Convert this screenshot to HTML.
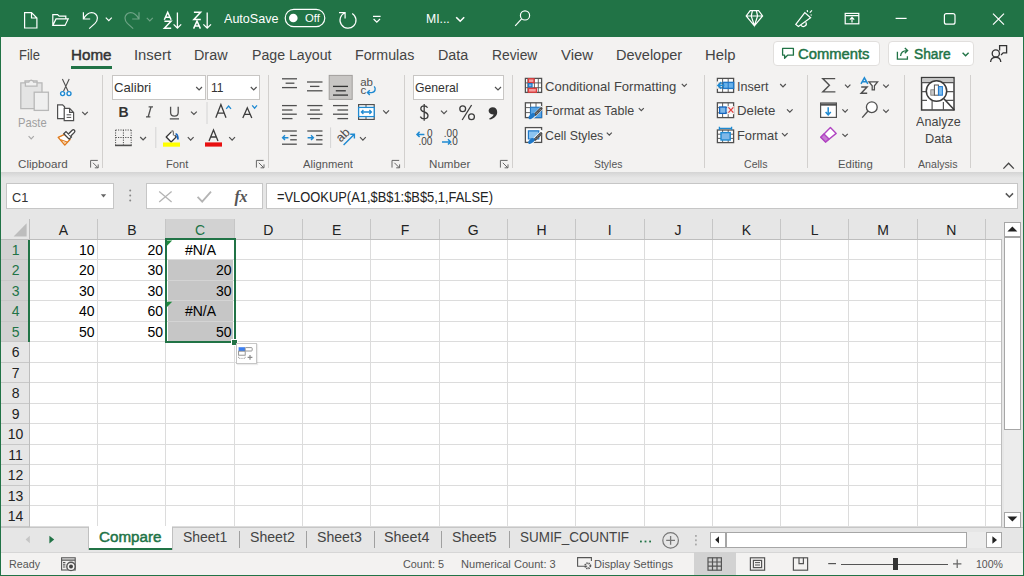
<!DOCTYPE html>
<html><head><meta charset="utf-8">
<style>
*{margin:0;padding:0;box-sizing:border-box}
html,body{width:1024px;height:576px;overflow:hidden;background:#f3f2f1;font-family:"Liberation Sans",sans-serif;position:relative}
.a{position:absolute}
.t{position:absolute;white-space:nowrap;line-height:1}
svg.a{overflow:visible}
</style></head><body>
<div class="a" style="left:0px;top:0px;width:1024px;height:37px;background:#217346;"></div>
<div class="a" style="left:0px;top:37px;width:1024px;height:135px;background:#f3f2f1;"></div>
<div class="a" style="left:1px;top:172px;width:1022px;height:10px;background:linear-gradient(#d4d4d4,#e6e6e6 6px,#e6e6e6);"></div>
<div class="a" style="left:1px;top:182px;width:1022px;height:345px;background:#e6e6e6;"></div>
<div class="a" style="left:6px;top:183px;width:108px;height:26px;background:#fff;border:1px solid #c6c6c6;"></div>
<div class="a" style="left:146px;top:183px;width:117px;height:26px;background:#fff;border:1px solid #c6c6c6;"></div>
<div class="a" style="left:266px;top:183px;width:752px;height:26px;background:#fff;border:1px solid #c6c6c6;"></div>
<div class="a" style="left:30px;top:239px;width:972px;height:288px;background:#fff;"></div>
<div class="a" style="left:1px;top:527px;width:1022px;height:25px;background:#e6e6e6;border-top:1px solid #c6c6c6;"></div>
<div class="a" style="left:1px;top:552px;width:1022px;height:23px;background:#f3f2f1;border-top:1px solid #d6d6d6;"></div>
<div class="a" style="left:0px;top:37px;width:1px;height:539px;background:#217346;"></div>
<div class="a" style="left:1023px;top:37px;width:1px;height:539px;background:#217346;"></div>
<div class="a" style="left:0px;top:575px;width:1024px;height:1px;background:#217346;"></div>
<div class="t" style="left:224.00px;top:11.99px;font-size:13px;color:#fff;transform:scaleX(0.9667);transform-origin:0 0;">AutoSave</div>
<div class="t" style="left:425.50px;top:11.99px;font-size:13px;color:#fff;transform:scaleX(0.9394);transform-origin:0 0;">MI...</div>
<div class="t" style="left:19.00px;top:47.65px;font-size:14px;color:#444;transform:scaleX(0.9307);transform-origin:0 0;">File</div>
<div class="t" style="left:134.00px;top:47.65px;font-size:14px;color:#444;transform:scaleX(1.0567);transform-origin:0 0;">Insert</div>
<div class="t" style="left:194.00px;top:47.65px;font-size:14px;color:#444;transform:scaleX(1.0253);transform-origin:0 0;">Draw</div>
<div class="t" style="left:251.50px;top:47.65px;font-size:14px;color:#444;transform:scaleX(1.0111);transform-origin:0 0;">Page Layout</div>
<div class="t" style="left:355.00px;top:47.65px;font-size:14px;color:#444;transform:scaleX(1.0153);transform-origin:0 0;">Formulas</div>
<div class="t" style="left:437.75px;top:47.65px;font-size:14px;color:#444;transform:scaleX(1.0227);transform-origin:0 0;">Data</div>
<div class="t" style="left:492.20px;top:47.65px;font-size:14px;color:#444;transform:scaleX(0.9868);transform-origin:0 0;">Review</div>
<div class="t" style="left:561.00px;top:47.65px;font-size:14px;color:#444;transform:scaleX(1.0633);transform-origin:0 0;">View</div>
<div class="t" style="left:615.90px;top:47.65px;font-size:14px;color:#444;transform:scaleX(1.0372);transform-origin:0 0;">Developer</div>
<div class="t" style="left:705.30px;top:47.65px;font-size:14px;color:#444;transform:scaleX(1.0591);transform-origin:0 0;">Help</div>
<div class="t" style="left:70.75px;top:47.65px;font-size:14px;color:#333;transform:scaleX(1.0841);transform-origin:0 0;-webkit-text-stroke:0.45px #333;">Home</div>
<div class="a" style="left:71px;top:66px;width:41px;height:3px;background:#217346;"></div>
<div class="a" style="left:773px;top:41px;width:107px;height:25px;background:#fff;border:1px solid #e1dfdd;border-radius:4px;"></div>
<div class="a" style="left:888px;top:41px;width:86px;height:25px;background:#fff;border:1px solid #e1dfdd;border-radius:4px;"></div>
<div class="t" style="left:798.25px;top:47.15px;font-size:14px;color:#217346;transform:scaleX(1.0563);transform-origin:0 0;-webkit-text-stroke:0.45px #217346;">Comments</div>
<div class="t" style="left:913.75px;top:47.15px;font-size:14px;color:#217346;transform:scaleX(0.9837);transform-origin:0 0;-webkit-text-stroke:0.45px #217346;">Share</div>
<div class="t" style="left:17.50px;top:115.99px;font-size:13px;color:#a0a0a0;transform:scaleX(0.8602);transform-origin:0 0;">Paste</div>
<div class="a" style="left:112px;top:75px;width:94px;height:25px;background:#fff;border:1px solid #c8c6c4;"></div>
<div class="a" style="left:207px;top:75px;width:53px;height:25px;background:#fff;border:1px solid #c8c6c4;"></div>
<div class="t" style="left:114.00px;top:80.99px;font-size:13px;color:#333;transform:scaleX(1.0110);transform-origin:0 0;">Calibri</div>
<div class="t" style="left:210.50px;top:80.99px;font-size:13px;color:#333;transform:scaleX(0.9259);transform-origin:0 0;">11</div>
<div class="a" style="left:413px;top:75px;width:91px;height:25px;background:#fff;border:1px solid #c8c6c4;"></div>
<div class="t" style="left:415.10px;top:80.99px;font-size:13px;color:#333;transform:scaleX(0.9405);transform-origin:0 0;">General</div>
<div class="t" style="left:545.25px;top:79.74px;font-size:13px;color:#444;transform:scaleX(1.0035);transform-origin:0 0;">Conditional Formatting</div>
<div class="t" style="left:545.25px;top:104.49px;font-size:13px;color:#444;transform:scaleX(0.9589);transform-origin:0 0;">Format as Table</div>
<div class="t" style="left:545.25px;top:129.24px;font-size:13px;color:#444;transform:scaleX(0.9484);transform-origin:0 0;">Cell Styles</div>
<div class="t" style="left:737.00px;top:79.74px;font-size:13px;color:#444;transform:scaleX(0.9688);transform-origin:0 0;">Insert</div>
<div class="t" style="left:737.00px;top:104.49px;font-size:13px;color:#444;transform:scaleX(1.0179);transform-origin:0 0;">Delete</div>
<div class="t" style="left:737.00px;top:129.24px;font-size:13px;color:#444;transform:scaleX(0.9898);transform-origin:0 0;">Format</div>
<div class="t" style="left:915.50px;top:114.99px;font-size:13px;color:#444;transform:scaleX(0.9676);transform-origin:0 0;">Analyze</div>
<div class="t" style="left:924.50px;top:132.49px;font-size:13px;color:#444;transform:scaleX(0.9829);transform-origin:0 0;">Data</div>
<div class="t" style="left:18.00px;top:158.69px;font-size:11px;color:#555;transform:scaleX(1.0575);transform-origin:0 0;">Clipboard</div>
<div class="t" style="left:166.10px;top:158.69px;font-size:11px;color:#555;transform:scaleX(1.0129);transform-origin:0 0;">Font</div>
<div class="t" style="left:302.60px;top:158.69px;font-size:11px;color:#555;transform:scaleX(1.0179);transform-origin:0 0;">Alignment</div>
<div class="t" style="left:429.25px;top:158.69px;font-size:11px;color:#555;transform:scaleX(1.0543);transform-origin:0 0;">Number</div>
<div class="t" style="left:593.80px;top:158.69px;font-size:11px;color:#555;transform:scaleX(0.9477);transform-origin:0 0;">Styles</div>
<div class="t" style="left:743.75px;top:158.69px;font-size:11px;color:#555;transform:scaleX(0.9610);transform-origin:0 0;">Cells</div>
<div class="t" style="left:838.25px;top:158.69px;font-size:11px;color:#555;transform:scaleX(1.0330);transform-origin:0 0;">Editing</div>
<div class="t" style="left:917.75px;top:158.69px;font-size:11px;color:#555;transform:scaleX(0.9654);transform-origin:0 0;">Analysis</div>
<div class="a" style="left:102px;top:75px;width:1px;height:93px;background:#d2d0ce;"></div>
<div class="a" style="left:268px;top:75px;width:1px;height:93px;background:#d2d0ce;"></div>
<div class="a" style="left:404px;top:75px;width:1px;height:93px;background:#d2d0ce;"></div>
<div class="a" style="left:512px;top:75px;width:1px;height:93px;background:#d2d0ce;"></div>
<div class="a" style="left:704px;top:75px;width:1px;height:93px;background:#d2d0ce;"></div>
<div class="a" style="left:807px;top:75px;width:1px;height:93px;background:#d2d0ce;"></div>
<div class="a" style="left:904px;top:75px;width:1px;height:93px;background:#d2d0ce;"></div>
<div class="a" style="left:970px;top:75px;width:1px;height:93px;background:#d2d0ce;"></div>
<div class="t" style="left:11.65px;top:190.59px;font-size:13px;color:#333;transform:scaleX(0.9774);transform-origin:0 0;">C1</div>
<div class="t" style="left:277.25px;top:190.40px;font-size:14px;color:#222;transform:scaleX(0.9206);transform-origin:0 0;">=VLOOKUP(A1,$B$1:$B$5,1,FALSE)</div>
<div class="a" style="left:1px;top:219px;width:1001px;height:20px;background:#e6e6e6;"></div>
<div class="a" style="left:166px;top:219px;width:69px;height:20px;background:#d2d2d2;"></div>
<div class="a" style="left:1px;top:239px;width:29px;height:288px;background:#e6e6e6;"></div>
<div class="a" style="left:1px;top:239px;width:29px;height:103px;background:#d2d2d2;"></div>
<div class="a" style="left:97px;top:240px;width:1px;height:287px;background:#dcdcdc;"></div>
<div class="a" style="left:97px;top:219px;width:1px;height:20px;background:#c6c6c6;"></div>
<div class="a" style="left:165px;top:240px;width:1px;height:287px;background:#dcdcdc;"></div>
<div class="a" style="left:165px;top:219px;width:1px;height:20px;background:#c6c6c6;"></div>
<div class="a" style="left:234px;top:240px;width:1px;height:287px;background:#dcdcdc;"></div>
<div class="a" style="left:234px;top:219px;width:1px;height:20px;background:#c6c6c6;"></div>
<div class="a" style="left:302px;top:240px;width:1px;height:287px;background:#dcdcdc;"></div>
<div class="a" style="left:302px;top:219px;width:1px;height:20px;background:#c6c6c6;"></div>
<div class="a" style="left:370px;top:240px;width:1px;height:287px;background:#dcdcdc;"></div>
<div class="a" style="left:370px;top:219px;width:1px;height:20px;background:#c6c6c6;"></div>
<div class="a" style="left:439px;top:240px;width:1px;height:287px;background:#dcdcdc;"></div>
<div class="a" style="left:439px;top:219px;width:1px;height:20px;background:#c6c6c6;"></div>
<div class="a" style="left:507px;top:240px;width:1px;height:287px;background:#dcdcdc;"></div>
<div class="a" style="left:507px;top:219px;width:1px;height:20px;background:#c6c6c6;"></div>
<div class="a" style="left:575px;top:240px;width:1px;height:287px;background:#dcdcdc;"></div>
<div class="a" style="left:575px;top:219px;width:1px;height:20px;background:#c6c6c6;"></div>
<div class="a" style="left:644px;top:240px;width:1px;height:287px;background:#dcdcdc;"></div>
<div class="a" style="left:644px;top:219px;width:1px;height:20px;background:#c6c6c6;"></div>
<div class="a" style="left:712px;top:240px;width:1px;height:287px;background:#dcdcdc;"></div>
<div class="a" style="left:712px;top:219px;width:1px;height:20px;background:#c6c6c6;"></div>
<div class="a" style="left:780px;top:240px;width:1px;height:287px;background:#dcdcdc;"></div>
<div class="a" style="left:780px;top:219px;width:1px;height:20px;background:#c6c6c6;"></div>
<div class="a" style="left:848px;top:240px;width:1px;height:287px;background:#dcdcdc;"></div>
<div class="a" style="left:848px;top:219px;width:1px;height:20px;background:#c6c6c6;"></div>
<div class="a" style="left:917px;top:240px;width:1px;height:287px;background:#dcdcdc;"></div>
<div class="a" style="left:917px;top:219px;width:1px;height:20px;background:#c6c6c6;"></div>
<div class="a" style="left:985px;top:240px;width:1px;height:287px;background:#dcdcdc;"></div>
<div class="a" style="left:985px;top:219px;width:1px;height:20px;background:#c6c6c6;"></div>
<div class="a" style="left:30px;top:259px;width:971px;height:1px;background:#dcdcdc;"></div>
<div class="a" style="left:1px;top:259px;width:28px;height:1px;background:#c8c8c8;"></div>
<div class="a" style="left:30px;top:280px;width:971px;height:1px;background:#dcdcdc;"></div>
<div class="a" style="left:1px;top:280px;width:28px;height:1px;background:#c8c8c8;"></div>
<div class="a" style="left:30px;top:300px;width:971px;height:1px;background:#dcdcdc;"></div>
<div class="a" style="left:1px;top:300px;width:28px;height:1px;background:#c8c8c8;"></div>
<div class="a" style="left:30px;top:321px;width:971px;height:1px;background:#dcdcdc;"></div>
<div class="a" style="left:1px;top:321px;width:28px;height:1px;background:#c8c8c8;"></div>
<div class="a" style="left:30px;top:341px;width:971px;height:1px;background:#dcdcdc;"></div>
<div class="a" style="left:1px;top:341px;width:28px;height:1px;background:#c8c8c8;"></div>
<div class="a" style="left:30px;top:362px;width:971px;height:1px;background:#dcdcdc;"></div>
<div class="a" style="left:1px;top:362px;width:28px;height:1px;background:#c8c8c8;"></div>
<div class="a" style="left:30px;top:382px;width:971px;height:1px;background:#dcdcdc;"></div>
<div class="a" style="left:1px;top:382px;width:28px;height:1px;background:#c8c8c8;"></div>
<div class="a" style="left:30px;top:403px;width:971px;height:1px;background:#dcdcdc;"></div>
<div class="a" style="left:1px;top:403px;width:28px;height:1px;background:#c8c8c8;"></div>
<div class="a" style="left:30px;top:423px;width:971px;height:1px;background:#dcdcdc;"></div>
<div class="a" style="left:1px;top:423px;width:28px;height:1px;background:#c8c8c8;"></div>
<div class="a" style="left:30px;top:444px;width:971px;height:1px;background:#dcdcdc;"></div>
<div class="a" style="left:1px;top:444px;width:28px;height:1px;background:#c8c8c8;"></div>
<div class="a" style="left:30px;top:464px;width:971px;height:1px;background:#dcdcdc;"></div>
<div class="a" style="left:1px;top:464px;width:28px;height:1px;background:#c8c8c8;"></div>
<div class="a" style="left:30px;top:485px;width:971px;height:1px;background:#dcdcdc;"></div>
<div class="a" style="left:1px;top:485px;width:28px;height:1px;background:#c8c8c8;"></div>
<div class="a" style="left:30px;top:505px;width:971px;height:1px;background:#dcdcdc;"></div>
<div class="a" style="left:1px;top:505px;width:28px;height:1px;background:#c8c8c8;"></div>
<div class="a" style="left:30px;top:526px;width:971px;height:1px;background:#dcdcdc;"></div>
<div class="a" style="left:1px;top:526px;width:28px;height:1px;background:#c8c8c8;"></div>
<div class="a" style="left:1px;top:239px;width:1001px;height:1px;background:#bdbdbd;"></div>
<div class="a" style="left:29px;top:219px;width:1px;height:308px;background:#bdbdbd;"></div>
<div class="a" style="left:1001px;top:239px;width:1px;height:288px;background:#bdbdbd;"></div>
<div class="t" style="left:29.5px;width:68px;text-align:center;top:222.75px;font-size:14px;color:#222">A</div>
<div class="t" style="left:97.8px;width:68px;text-align:center;top:222.75px;font-size:14px;color:#222">B</div>
<div class="t" style="left:166.1px;width:68px;text-align:center;top:222.75px;font-size:14px;color:#217346">C</div>
<div class="t" style="left:234.4px;width:68px;text-align:center;top:222.75px;font-size:14px;color:#222">D</div>
<div class="t" style="left:302.7px;width:68px;text-align:center;top:222.75px;font-size:14px;color:#222">E</div>
<div class="t" style="left:371.0px;width:68px;text-align:center;top:222.75px;font-size:14px;color:#222">F</div>
<div class="t" style="left:439.2px;width:68px;text-align:center;top:222.75px;font-size:14px;color:#222">G</div>
<div class="t" style="left:507.5px;width:68px;text-align:center;top:222.75px;font-size:14px;color:#222">H</div>
<div class="t" style="left:575.8px;width:68px;text-align:center;top:222.75px;font-size:14px;color:#222">I</div>
<div class="t" style="left:644.1px;width:68px;text-align:center;top:222.75px;font-size:14px;color:#222">J</div>
<div class="t" style="left:712.4px;width:68px;text-align:center;top:222.75px;font-size:14px;color:#222">K</div>
<div class="t" style="left:780.7px;width:68px;text-align:center;top:222.75px;font-size:14px;color:#222">L</div>
<div class="t" style="left:849.0px;width:68px;text-align:center;top:222.75px;font-size:14px;color:#222">M</div>
<div class="t" style="left:917.3px;width:68px;text-align:center;top:222.75px;font-size:14px;color:#222">N</div>
<div class="t" style="left:1.6px;width:28px;text-align:center;top:243.35px;font-size:14px;color:#217346">1</div>
<div class="t" style="left:1.6px;width:28px;text-align:center;top:263.35px;font-size:14px;color:#217346">2</div>
<div class="t" style="left:1.6px;width:28px;text-align:center;top:284.35px;font-size:14px;color:#217346">3</div>
<div class="t" style="left:1.6px;width:28px;text-align:center;top:304.35px;font-size:14px;color:#217346">4</div>
<div class="t" style="left:1.6px;width:28px;text-align:center;top:325.35px;font-size:14px;color:#217346">5</div>
<div class="t" style="left:1.6px;width:28px;text-align:center;top:345.35px;font-size:14px;color:#222">6</div>
<div class="t" style="left:1.6px;width:28px;text-align:center;top:366.35px;font-size:14px;color:#222">7</div>
<div class="t" style="left:1.6px;width:28px;text-align:center;top:386.35px;font-size:14px;color:#222">8</div>
<div class="t" style="left:1.6px;width:28px;text-align:center;top:407.35px;font-size:14px;color:#222">9</div>
<div class="t" style="left:1.6px;width:28px;text-align:center;top:427.35px;font-size:14px;color:#222">10</div>
<div class="t" style="left:1.6px;width:28px;text-align:center;top:448.35px;font-size:14px;color:#222">11</div>
<div class="t" style="left:1.6px;width:28px;text-align:center;top:468.35px;font-size:14px;color:#222">12</div>
<div class="t" style="left:1.6px;width:28px;text-align:center;top:489.35px;font-size:14px;color:#222">13</div>
<div class="t" style="left:1.6px;width:28px;text-align:center;top:509.35px;font-size:14px;color:#222">14</div>
<div class="a" style="left:168px;top:260px;width:65px;height:81px;background:#c6c6c6;"></div>
<div class="a" style="left:168px;top:280px;width:65px;height:1px;background:#d4d4d4;"></div>
<div class="a" style="left:168px;top:300px;width:65px;height:1px;background:#d4d4d4;"></div>
<div class="a" style="left:168px;top:321px;width:65px;height:1px;background:#d4d4d4;"></div>
<div class="t" style="left:30px;width:64.5px;text-align:right;top:243.35px;font-size:14px;color:#000">10</div>
<div class="t" style="left:98px;width:65px;text-align:right;top:243.35px;font-size:14px;color:#000">20</div>
<div class="t" style="left:166px;width:69px;text-align:center;top:243.35px;font-size:14px;color:#000">#N/A</div>
<div class="t" style="left:30px;width:64.5px;text-align:right;top:263.35px;font-size:14px;color:#000">20</div>
<div class="t" style="left:98px;width:65px;text-align:right;top:263.35px;font-size:14px;color:#000">30</div>
<div class="t" style="left:166px;width:65.5px;text-align:right;top:263.35px;font-size:14px;color:#000">20</div>
<div class="t" style="left:30px;width:64.5px;text-align:right;top:284.35px;font-size:14px;color:#000">30</div>
<div class="t" style="left:98px;width:65px;text-align:right;top:284.35px;font-size:14px;color:#000">30</div>
<div class="t" style="left:166px;width:65.5px;text-align:right;top:284.35px;font-size:14px;color:#000">30</div>
<div class="t" style="left:30px;width:64.5px;text-align:right;top:304.35px;font-size:14px;color:#000">40</div>
<div class="t" style="left:98px;width:65px;text-align:right;top:304.35px;font-size:14px;color:#000">60</div>
<div class="t" style="left:166px;width:69px;text-align:center;top:304.35px;font-size:14px;color:#000">#N/A</div>
<div class="t" style="left:30px;width:64.5px;text-align:right;top:325.35px;font-size:14px;color:#000">50</div>
<div class="t" style="left:98px;width:65px;text-align:right;top:325.35px;font-size:14px;color:#000">50</div>
<div class="t" style="left:166px;width:65.5px;text-align:right;top:325.35px;font-size:14px;color:#000">50</div>
<div class="a" style="left:165px;top:238px;width:71px;height:105px;background:transparent;border:2px solid #217346;"></div>
<div class="a" style="left:231px;top:339px;width:7px;height:7px;background:#fff;"></div>
<div class="a" style="left:232px;top:340px;width:5px;height:5px;background:#217346;"></div>
<div class="a" style="left:28px;top:240px;width:2px;height:102px;background:#217346;"></div>
<div class="a" style="left:88px;top:527px;width:1px;height:23px;background:#c0c0c0;"></div>
<div class="a" style="left:172px;top:527px;width:1px;height:23px;background:#c0c0c0;"></div>
<div class="a" style="left:89px;top:526px;width:83px;height:24px;background:#fff;"></div>
<div class="a" style="left:89px;top:548px;width:83px;height:2px;background:#217346;"></div>
<div class="t" style="left:98.90px;top:529.75px;font-size:14px;color:#217346;transform:scaleX(1.0852);transform-origin:0 0;-webkit-text-stroke:0.45px #217346;">Compare</div>
<div class="t" style="left:182.50px;top:530.15px;font-size:14px;color:#444;transform:scaleX(0.9972);transform-origin:0 0;">Sheet1</div>
<div class="t" style="left:250.00px;top:530.15px;font-size:14px;color:#444;transform:scaleX(1.0085);transform-origin:0 0;">Sheet2</div>
<div class="t" style="left:317.00px;top:530.15px;font-size:14px;color:#444;transform:scaleX(1.0085);transform-origin:0 0;">Sheet3</div>
<div class="t" style="left:384.25px;top:530.15px;font-size:14px;color:#444;transform:scaleX(1.0220);transform-origin:0 0;">Sheet4</div>
<div class="t" style="left:452.10px;top:530.15px;font-size:14px;color:#444;transform:scaleX(1.0073);transform-origin:0 0;">Sheet5</div>
<div class="t" style="left:519.90px;top:530.15px;font-size:14px;color:#444;transform:scaleX(0.9607);transform-origin:0 0;">SUMIF_COUNTIF</div>
<div class="a" style="left:239px;top:531px;width:1px;height:17px;background:#a0a0a0;"></div>
<div class="a" style="left:306px;top:531px;width:1px;height:17px;background:#a0a0a0;"></div>
<div class="a" style="left:374px;top:531px;width:1px;height:17px;background:#a0a0a0;"></div>
<div class="a" style="left:441px;top:531px;width:1px;height:17px;background:#a0a0a0;"></div>
<div class="a" style="left:509px;top:531px;width:1px;height:17px;background:#a0a0a0;"></div>
<div class="a" style="left:710px;top:532px;width:16px;height:16px;background:#fff;border:1px solid #a6a6a6;"></div>
<div class="a" style="left:966px;top:532px;width:20px;height:16px;background:#ececec;"></div>
<div class="a" style="left:726px;top:532px;width:241px;height:16px;background:#fff;border:1px solid #a6a6a6;"></div>
<div class="a" style="left:986px;top:532px;width:16px;height:16px;background:#fff;border:1px solid #a6a6a6;"></div>
<div class="a" style="left:1004px;top:222px;width:17px;height:15px;background:#fff;border:1px solid #a6a6a6;"></div>
<div class="a" style="left:1004px;top:429px;width:17px;height:83px;background:#ececec;"></div>
<div class="a" style="left:1004px;top:237px;width:17px;height:193px;background:#fff;border:1px solid #a6a6a6;"></div>
<div class="a" style="left:1004px;top:512px;width:17px;height:16px;background:#fff;border:1px solid #a6a6a6;"></div>
<div class="t" style="left:9.25px;top:558.94px;font-size:11px;color:#555;transform:scaleX(0.9749);transform-origin:0 0;">Ready</div>
<div class="t" style="left:402.90px;top:558.94px;font-size:11px;color:#555;transform:scaleX(0.9857);transform-origin:0 0;">Count: 5</div>
<div class="t" style="left:461.00px;top:558.94px;font-size:11px;color:#555;transform:scaleX(1.0063);transform-origin:0 0;">Numerical Count: 3</div>
<div class="t" style="left:594.40px;top:558.94px;font-size:11px;color:#555;transform:scaleX(1.0029);transform-origin:0 0;">Display Settings</div>
<div class="t" style="left:975.50px;top:558.94px;font-size:11px;color:#555;transform:scaleX(0.9595);transform-origin:0 0;">100%</div>
<div class="a" style="left:694px;top:552px;width:42px;height:23px;background:#d2d2d2;"></div>
<div class="a" style="left:841px;top:564px;width:107px;height:1px;background:#555;"></div>
<div class="a" style="left:893px;top:558px;width:5px;height:12px;background:#333;"></div>
<svg class="a" style="left:0px;top:0px;" width="1024" height="37" viewBox="0 0 1024 37">
<g stroke="#fff" stroke-width="1.2" fill="none">
<path d="M24.6,12.6 H31.5 L36.9,18 V28 H24.6 Z M31.5,12.6 V18 H36.9"/>
<path d="M52.8,25.4 V14.6 H57.6 L59.2,16.2 H65.8 V18.9 M52.8,25.4 L56,18.9 H68.2 L65,25.4 Z"/>
<path d="M83.4,12.2 V19 H90.2 M83.6,18.8 C86,14.5 89,12.6 91.6,12.6 C95,12.6 97.4,15.2 97.4,18 C97.4,20.5 96.4,22 95,23.4 L89.2,28.6"/>
<path d="M105.8,17.6 L108.8,20.6 L111.8,17.6"/>
<path d="M373,16.4 H380.6 M373.6,19 L376.8,22.2 L380,19"/>
<path d="M456.2,17.2 L460.2,21.2 L464.2,17.2" stroke-width="1.6"/>
<rect x="285.2" y="9.4" width="39.6" height="17.2" rx="8.6"/>
<path d="M339,12.6 H345.1 V18.6 M345,12.8 A8,8 0 1 0 352.2,13.4"/>
<circle cx="525" cy="15.4" r="4.6"/><path d="M521.6,18.9 L515.2,25.8"/>
<path d="M750.2,10.6 H758.6 L762.6,16 L754.4,25.8 L746.2,16 Z M746.2,16 H762.6 M752.4,10.8 L751.2,16 L754.4,25.6 L757.6,16 L756.4,10.8"/>
<path d="M795.8,24.4 L804.8,12.6 L810.6,17.8 L798.4,26.4 Z M801,25.2 A2.6,2.6 0 0 0 805.8,22.2 M807.2,10.2 L807.6,12 M809.8,12.6 L812,10.4 M810.6,14.8 L811.8,15.2"/>
<rect x="845.2" y="13.4" width="13.6" height="10.4"/><path d="M845.2,15.6 H858.8 M852,22.6 V17.6 M849.8,19.6 L852,17.4 L854.2,19.6"/>
<path d="M895.6,18.4 H906.6"/>
<rect x="944.4" y="13.6" width="10.6" height="10.6" rx="2"/>
<path d="M993,13.6 L1004,24.6 M1004,13.6 L993,24.6"/>
</g>
<g stroke="rgba(255,255,255,0.35)" stroke-width="1.2" fill="none">
<path d="M139,12.2 V19 H132.2 M138.8,18.8 C136.4,14.5 133.4,12.6 130.8,12.6 C127.4,12.6 125,15.2 125,18 C125,20.5 126,22 127.4,23.4 L133.2,28.6"/>
<path d="M146.8,17.8 L149.8,20.8 L152.8,17.8"/>
</g>
<circle cx="293.3" cy="18" r="4.3" fill="#fff"/>
<g stroke="#fff" stroke-width="1.3" fill="none">
<path d="M177.4,12.4 V28.2 M173.6,24.4 L177.4,28.2 L181.2,24.4"/>
<path d="M207.2,12.4 V28.2 M203.4,24.4 L207.2,28.2 L211,24.4"/>
</g>
</svg>
<svg class="a" style="left:0px;top:0px;" width="1024" height="37" viewBox="0 0 1024 37"><g stroke="#fff" stroke-width="1.5" fill="none" stroke-linejoin="miter">
<path d="M164.3,19.8 L167.7,12.3 L171.1,19.8 M165.4,17.3 H170"/><path d="M164.4,21.2 H171 L164.4,28.2 H171.2"/>
<path d="M193.9,12.3 H200.6 L193.9,19.4 H200.8"/><path d="M193.6,28.6 L197,21.1 L200.4,28.6 M194.7,26.1 H199.3"/>
</g></svg>
<div class="t" style="left:304.50px;top:12.89px;font-size:11px;color:#fff;transform:scaleX(1.0218);transform-origin:0 0;">Off</div>
<svg class="a" style="left:0px;top:0px;" width="1024" height="176" viewBox="0 0 1024 176"><g stroke="#b8b8b8" stroke-width="1.3" fill="#e4e4e4">
<path d="M20.8,82.8 H25 V80.8 H37 V82.8 H42 V108.6 H20.8 Z"/>
<path d="M25.4,86.2 V82.2 H28.8 C29.2,79.6 33.2,79.6 33.6,82.2 H37 V86.2 Z" fill="#f0f0f0"/>
<rect x="34.2" y="92.2" width="14.2" height="18.2" fill="#efefef"/>
</g>
<path d="M28.6,136.2 L31.200000000000003,138.79999999999998 L33.800000000000004,136.2" stroke="#a8a8a8" stroke-width="1.2" fill="none"/>
<path d="M62.4,79 L68.2,91.4 M69.2,79 L63.4,91.4" stroke="#505050" stroke-width="1.1" fill="none"/>
<circle cx="62.6" cy="93.6" r="2" stroke="#1f8ad2" stroke-width="1.4" fill="#fff"/><circle cx="69" cy="93.6" r="2" stroke="#1f8ad2" stroke-width="1.4" fill="#fff"/>
<g stroke="#505050" stroke-width="1.2" fill="#fff">
<path d="M57.6,104.8 H62.6 L64.6,106.8 V118.6 H57.6 Z"/>
<path d="M64.2,108.4 H69.6 L73.6,112.4 V120.6 H64.2 Z M69.6,108.4 V112.4 H73.6"/>
<path d="M66.6,114.8 H71.2 M66.6,117.4 H71.2" stroke-width="1"/>
</g>
<path d="M82.2,111.8 L85.0,114.6 L87.8,111.8" stroke="#505050" stroke-width="1.2" fill="none"/>
<path d="M64.6,134.4 L58.2,137.4 L64.8,145 L70,139.6 Z" fill="#fff" stroke="#e07b1d" stroke-width="1.4" stroke-linejoin="round"/>
<path d="M60.8,139.8 L67.2,142" stroke="#e07b1d" stroke-width="1.1"/><path d="M63,142.2 L66,143" stroke="#f7c48e" stroke-width="1.2"/>
<path d="M63.8,133.8 L66,131.6 L71.4,137 L69.2,139.2 Z" fill="#fff" stroke="#444" stroke-width="1.3"/>
<path d="M68.4,134 L72.2,130.2 C72.8,129.6 73.8,129.6 74.4,130.2 C75,130.8 75,131.8 74.4,132.4 L70.6,136.2" fill="#fff" stroke="#444" stroke-width="1.3"/>
<path d="M250.8,87 L253.70000000000002,89.9 L256.6,87" stroke="#505050" stroke-width="1.2" fill="none"/>
<path d="M196.2,87 L199.1,89.9 L202.0,87" stroke="#505050" stroke-width="1.2" fill="none"/>
<path d="M191,111.6 L193.9,114.5 L196.8,111.6" stroke="#505050" stroke-width="1.2" fill="none"/>
<path d="M140.2,137 L143.1,139.9 L146.0,137" stroke="#505050" stroke-width="1.2" fill="none"/>
<path d="M187.8,137.2 L190.70000000000002,140.1 L193.60000000000002,137.2" stroke="#505050" stroke-width="1.2" fill="none"/>
<path d="M229.2,137.2 L232.1,140.1 L235.0,137.2" stroke="#505050" stroke-width="1.2" fill="none"/>
<path d="M148.6,106.9 H153 M146,116.9 H150.4 M151,107 L148.2,116.8" stroke="#505050" stroke-width="1.3" fill="none"/>
<path d="M170.6,106.8 V112.6 C170.6,117.4 178.2,117.4 178.2,112.6 V106.8 M169.8,118.8 H179" stroke="#505050" stroke-width="1.3" fill="none"/>
<path d="M215.8,117.8 L220.9,104.6 L226,117.8 M217.6,113.2 H224.2" stroke="#3c3c3c" stroke-width="1.3" fill="none"/>
<path d="M226.2,108.8 L228.6,106 L231,108.8" stroke="#1f8ad2" stroke-width="1.3" fill="none"/>
<path d="M242.8,118 L247.3,107.8 L251.8,118 M244.4,114.4 H250.2" stroke="#3c3c3c" stroke-width="1.3" fill="none"/>
<path d="M252.2,105.4 L254.6,108.2 L257,105.4" stroke="#1f8ad2" stroke-width="1.3" fill="none"/>
<path d="M207,102 V124 M155.8,127 V148" stroke="#d4d4d4" stroke-width="1"/>
<g stroke="#505050" stroke-width="1" stroke-dasharray="1.2 1.2" fill="none">
<path d="M115.6,130 H131.2 M115.6,130 V145 M131.2,130 V145 M123.4,130 V145 M115.6,137.5 H131.2"/></g>
<path d="M115,145.4 H131.8" stroke="#505050" stroke-width="1.6"/>
<path d="M171.3,131.9 L166.2,137 L171.1,142 L176.3,136.9 L174.6,135.2" fill="#fff" stroke="#333" stroke-width="1.3" stroke-linejoin="round"/>
<path d="M171.4,131.6 C172.2,130.4 173.4,130.8 173.4,132.2 V135.6" stroke="#777" stroke-width="1.2" fill="none"/>
<path d="M175.6,133.8 C177.4,133.8 177.9,135.8 177.9,139.6" stroke="#1565c0" stroke-width="1.8" fill="none"/>
<rect x="163" y="142.5" width="17" height="4.2" fill="#ffff00"/>
<path d="M209,141 L213.5,130 L218,141 M210.8,137 H216.2" stroke="#3c3c3c" stroke-width="1.3" fill="none"/>
<rect x="205" y="142.4" width="17" height="4.2" fill="#e81010"/>
<path d="M282,78.8 H297" stroke="#505050" stroke-width="1.3"/><path d="M285.6,83.2 H294.4" stroke="#505050" stroke-width="1.3"/><path d="M282,87.6 H297" stroke="#505050" stroke-width="1.3"/>
<path d="M307,82 H322.5" stroke="#505050" stroke-width="1.3"/><path d="M310,86.4 H319.4" stroke="#505050" stroke-width="1.3"/><path d="M307,90.8 H322.5" stroke="#505050" stroke-width="1.3"/>
<rect x="329.2" y="75.4" width="23" height="24" fill="#c8c6c4" stroke="#a19f9d" stroke-width="1"/>
<path d="M333,86.4 H348" stroke="#333" stroke-width="1.3"/><path d="M335.8,90.8 H345.8" stroke="#333" stroke-width="1.3"/><path d="M333,95.1 H348" stroke="#333" stroke-width="1.3"/>
<path d="M282,105.6 H296.8" stroke="#505050" stroke-width="1.3"/><path d="M282,110 H292.5" stroke="#505050" stroke-width="1.3"/><path d="M282,114.2 H296.8" stroke="#505050" stroke-width="1.3"/><path d="M282,118.6 H292.5" stroke="#505050" stroke-width="1.3"/>
<path d="M307.3,105.6 H322.5" stroke="#505050" stroke-width="1.3"/><path d="M310,110 H319.9" stroke="#505050" stroke-width="1.3"/><path d="M307.3,114.2 H322.5" stroke="#505050" stroke-width="1.3"/><path d="M310,118.6 H319.9" stroke="#505050" stroke-width="1.3"/>
<path d="M333,105.6 H348.1" stroke="#505050" stroke-width="1.3"/><path d="M337.4,110 H348.1" stroke="#505050" stroke-width="1.3"/><path d="M333,114.2 H348.1" stroke="#505050" stroke-width="1.3"/><path d="M337.4,118.6 H348.1" stroke="#505050" stroke-width="1.3"/>
<path d="M374.2,86.4 C376.2,88.6 375.2,92.6 371.6,92.6 H367.6 M369.8,90.2 L367.4,92.6 L369.8,95" stroke="#1f8ad2" stroke-width="1.4" fill="none"/>
<rect x="358.6" y="104.6" width="15.6" height="14.8" fill="#fff" stroke="#505050" stroke-width="1.2"/>
<path d="M366,104.6 V119.4" stroke="#505050" stroke-width="1"/>
<rect x="358.6" y="107.4" width="15.6" height="9.2" fill="#fff" stroke="#1f8ad2" stroke-width="1.3"/>
<path d="M361.4,112 H371.4 M363.4,110 L361.4,112 L363.4,114 M369.4,110 L371.4,112 L369.4,114" stroke="#1f8ad2" stroke-width="1.3" fill="none"/>
<path d="M383.2,110.4 L386.09999999999997,113.30000000000001 L389.0,110.4" stroke="#505050" stroke-width="1.2" fill="none"/>
<path d="M282,131 H296.8" stroke="#505050" stroke-width="1.3"/><path d="M290.2,135.5 H296.8" stroke="#505050" stroke-width="1.3"/><path d="M290.2,139.8 H296.8" stroke="#505050" stroke-width="1.3"/><path d="M282,144.2 H296.8" stroke="#505050" stroke-width="1.3"/>
<path d="M288.4,137.7 H282.6 M285,135.3 L282.6,137.7 L285,140.1" stroke="#1f8ad2" stroke-width="1.4" fill="none"/>
<path d="M307.3,131 H322.5" stroke="#505050" stroke-width="1.3"/><path d="M316.1,135.5 H322.5" stroke="#505050" stroke-width="1.3"/><path d="M316.1,139.8 H322.5" stroke="#505050" stroke-width="1.3"/><path d="M307.3,144.2 H322.5" stroke="#505050" stroke-width="1.3"/>
<path d="M307.6,137.7 H313.4 M311,135.3 L313.4,137.7 L311,140.1" stroke="#1f8ad2" stroke-width="1.4" fill="none"/>
<path d="M330.6,127.4 V148" stroke="#d4d4d4" stroke-width="1"/>
<path d="M343.6,145 L354.4,134.2 M350.2,134.2 H354.4 V138.4" stroke="#1f8ad2" stroke-width="1.4" fill="none"/>
<path d="M360,137.2 L362.9,140.1 L365.8,137.2" stroke="#505050" stroke-width="1.2" fill="none"/>
<path d="M441,110.6 L444.0,113.6 L447,110.6" stroke="#505050" stroke-width="1.2" fill="none"/>
<path d="M495,87 L498.0,90.0 L501,87" stroke="#505050" stroke-width="1.2" fill="none"/>
<path d="M424.4,134.4 H417 M419.6,131.8 L417,134.4 L419.6,137" stroke="#1f8ad2" stroke-width="1.5" fill="none"/>
<path d="M442,141.9 H450.6 M448,139.3 L450.6,141.9 L448,144.5" stroke="#1f8ad2" stroke-width="1.5" fill="none"/>
<path d="M90.6,167.6 V160.4 H97.8 M93.0,162.8 L98.0,167.8 M98.19999999999999,164.4 V167.8 H94.8" stroke="#666" stroke-width="1" fill="none"/>
<path d="M256.4,167.6 V160.4 H263.59999999999997 M258.79999999999995,162.8 L263.79999999999995,167.8 M264.0,164.4 V167.8 H260.59999999999997" stroke="#666" stroke-width="1" fill="none"/>
<path d="M392,167.6 V160.4 H399.2 M394.4,162.8 L399.4,167.8 M399.6,164.4 V167.8 H396.2" stroke="#666" stroke-width="1" fill="none"/>
<path d="M500.4,167.6 V160.4 H507.59999999999997 M502.79999999999995,162.8 L507.79999999999995,167.8 M508.0,164.4 V167.8 H504.59999999999997" stroke="#666" stroke-width="1" fill="none"/></svg>
<div class="t" style="left:118.6px;top:105.15px;font-size:14px;font-weight:bold;color:#333">B</div>
<div class="t" style="left:360.2px;top:76.86px;font-size:11.5px;color:#505050">ab</div>
<div class="t" style="left:360.4px;top:84.86px;font-size:11.5px;color:#505050">c</div>
<div class="t" style="left:334.2px;top:129.4px;font-size:12.5px;color:#505050;transform:rotate(-45deg);transform-origin:50% 50%;width:18px;height:12.5px;text-align:center">ab</div>
<svg class="a" style="left:0px;top:0px;" width="1024" height="176" viewBox="0 0 1024 176"><g stroke="#3c3c3c" stroke-width="1.3" fill="none"><path d="M427.6,107.8 C426.8,106.4 425.6,105.8 424.2,105.8 C422,105.8 420.8,107.1 420.8,108.9 C420.8,112.6 428,111.3 428,115.6 C428,117.6 426.5,118.8 424.2,118.8 C422.5,118.8 421.1,118.1 420.3,116.6 M424.2,104 V120.8"/><circle cx="462.7" cy="108.7" r="2.9"/><circle cx="471.5" cy="116.7" r="2.9"/><path d="M471.6,105 L462.2,120"/></g></svg>
<svg class="a" style="left:0px;top:0px;" width="1024" height="176" viewBox="0 0 1024 176"><path d="M492.6,107.2 C495.4,107.2 497.2,109.2 497.2,112 C497.2,115.8 494.4,118.6 489.6,119.6 L489.2,118.4 C491.8,117.4 493.4,115.8 493.6,114.6 C490.8,114.6 488.6,113 488.6,110.8 C488.6,108.8 490.4,107.2 492.6,107.2 Z" fill="#333"/></svg>
<div class="t" style="left:427px;top:128.53px;font-size:10px;color:#444">0</div>
<div class="t" style="left:418.4px;top:137.13px;font-size:10px;color:#444">.00</div>
<div class="t" style="left:443.8px;top:128.53px;font-size:10px;color:#444">.00</div>
<div class="t" style="left:449.6px;top:137.13px;font-size:10px;color:#444">.0</div>
<svg class="a" style="left:0px;top:0px;" width="1024" height="176" viewBox="0 0 1024 176"><rect x="525.4" y="78.4" width="16.200000000000045" height="14.0" fill="#fff" stroke="#505050" stroke-width="1.3"/><path d="M527.9,78.4 V92.4" stroke="#505050" stroke-width="0.9"/><path d="M534.4,78.4 V92.4" stroke="#505050" stroke-width="0.9"/><path d="M538.3,78.4 V92.4" stroke="#505050" stroke-width="0.9"/><path d="M525.4,82.9 H541.6" stroke="#505050" stroke-width="0.9"/><path d="M525.4,87.7 H541.6" stroke="#505050" stroke-width="0.9"/>
<rect x="528.4" y="78.8" width="5.6" height="3.8" fill="#f4a0a0" stroke="#e03c3c" stroke-width="1.3"/>
<rect x="528.4" y="83.6" width="3.6" height="3.4" fill="#7fb8e8" stroke="#1f78c8" stroke-width="1.3"/>
<rect x="528.4" y="88.4" width="8" height="3.8" fill="#f4a0a0" stroke="#e03c3c" stroke-width="1.3"/>
<path d="M681.8,83.8 L684.3,86.3 L686.8,83.8" stroke="#505050" stroke-width="1.2" fill="none"/>
<rect x="525.4" y="102.8" width="16.200000000000045" height="14.799999999999997" fill="#fff" stroke="#505050" stroke-width="1.3"/><path d="M530.6,102.8 V117.6" stroke="#505050" stroke-width="0.9"/><path d="M536,102.8 V117.6" stroke="#505050" stroke-width="0.9"/><path d="M525.4,107.6 H541.6" stroke="#505050" stroke-width="0.9"/><path d="M525.4,112.6 H541.6" stroke="#505050" stroke-width="0.9"/>
<path d="M530.4,107.2 H541.6 V117.6 H530.4 Z" fill="#5aa6e6" stroke="#1f78c8" stroke-width="1"/>
<path d="M530.6,119.2 L542.8,107" stroke="#f3f2f1" stroke-width="3.6"/>
<path d="M535.2,114.6 L541.2,108.6" stroke="#4a4a4a" stroke-width="2.8" stroke-linecap="round"/><path d="M535.8,114 L540.8,109" stroke="#bbb" stroke-width="0.9" stroke-dasharray="1 1"/>
<ellipse cx="531.8" cy="116.2" rx="3.8" ry="2.1" transform="rotate(-40 531.8 116.2)" fill="#1f78c8"/>
<path d="M638.8,108.2 L641.3,110.7 L643.8,108.2" stroke="#505050" stroke-width="1.2" fill="none"/>
<rect x="525.4" y="127.6" width="16.2" height="14.8" fill="#fff" stroke="#505050" stroke-width="1.3"/>
<path d="M528.4,130.8 H538.8 V139 H528.4 Z" fill="#8cc4f0" stroke="#1f78c8" stroke-width="1.2"/>
<path d="M529.8,144 L543,131" stroke="#fff" stroke-width="3.6"/>
<path d="M535,139.4 L541,133.4" stroke="#4a4a4a" stroke-width="2.8" stroke-linecap="round"/><path d="M535.6,138.8 L540.6,133.8" stroke="#bbb" stroke-width="0.9" stroke-dasharray="1 1"/>
<ellipse cx="531.4" cy="141" rx="3.8" ry="2.1" transform="rotate(-40 531.4 141)" fill="#1f78c8"/>
<path d="M606.8,132.6 L609.3,135.1 L611.8,132.6" stroke="#505050" stroke-width="1.2" fill="none"/>
<rect x="717.4" y="78.4" width="16.200000000000045" height="14.0" fill="#fff" stroke="#505050" stroke-width="1.3"/><path d="M722.6,78.4 V92.4" stroke="#505050" stroke-width="0.9"/><path d="M728.2,78.4 V92.4" stroke="#505050" stroke-width="0.9"/><path d="M717.4,83.2 H733.6" stroke="#505050" stroke-width="0.9"/><path d="M717.4,87.8 H733.6" stroke="#505050" stroke-width="0.9"/>
<rect x="716.4" y="81.4" width="2.2" height="7.4" fill="#f3f2f1"/>
<rect x="723.2" y="82.4" width="10.4" height="6" fill="#6ab2ea" stroke="#1f78c8" stroke-width="1.4"/><path d="M728.2,82.4 V88.4" stroke="#1f78c8" stroke-width="1"/>
<path d="M724.4,85.4 H718.4 M721.4,82.2 L718,85.4 L721.4,88.6" stroke="#1f8ad2" stroke-width="1.6" fill="none"/>
<path d="M780.2,84 L783.0,86.8 L785.8000000000001,84" stroke="#505050" stroke-width="1.2" fill="none"/>
<rect x="717.4" y="102.8" width="16.200000000000045" height="14.799999999999997" fill="#fff" stroke="#505050" stroke-width="1.3"/><path d="M722.6,102.8 V117.6" stroke="#505050" stroke-width="0.9"/><path d="M728.2,102.8 V117.6" stroke="#505050" stroke-width="0.9"/><path d="M717.4,107.6 H733.6" stroke="#505050" stroke-width="0.9"/><path d="M717.4,112.8 H733.6" stroke="#505050" stroke-width="0.9"/>
<rect x="719.6" y="107" width="6.4" height="6.4" fill="#7fb8e8" stroke="#1565c0" stroke-width="1.3"/>
<rect x="727.2" y="106.2" width="7" height="8" fill="#f3f2f1"/><path d="M728.4,107.4 L733.4,112.6 M733.4,107.4 L728.4,112.6" stroke="#e03c3c" stroke-width="1.3"/>
<path d="M787,109.4 L789.8,112.2 L792.6,109.4" stroke="#505050" stroke-width="1.2" fill="none"/>
<rect x="717.4" y="130" width="16.200000000000045" height="12.599999999999994" fill="#fff" stroke="#505050" stroke-width="1.3"/><path d="M722.6,130 V142.6" stroke="#505050" stroke-width="0.9"/><path d="M728.2,130 V142.6" stroke="#505050" stroke-width="0.9"/><path d="M717.4,134.2 H733.6" stroke="#505050" stroke-width="0.9"/><path d="M717.4,138.4 H733.6" stroke="#505050" stroke-width="0.9"/>
<rect x="721" y="132.6" width="9.2" height="7.4" fill="#7fb8e8" stroke="#1f8ad2" stroke-width="1.4"/>
<path d="M719.4,128.4 H731.6 M719.4,126.8 V130 M731.6,126.8 V130" stroke="#1f8ad2" stroke-width="1.3"/>
<path d="M782,133.2 L784.8,136.0 L787.6,133.2" stroke="#505050" stroke-width="1.2" fill="none"/>
<path d="M835.2,78.6 H822.8 L829.4,85.2 L822.8,91.9 H835.4" stroke="#505050" stroke-width="1.4" fill="none"/>
<path d="M845,84.6 L847.7,87.3 L850.4,84.6" stroke="#505050" stroke-width="1.2" fill="none"/>
<path d="M861,83.8 L864.4,77.8 L867.8,83.8 M862.2,81.8 H866.6" stroke="#1f8ad2" stroke-width="1.5" fill="none"/>
<path d="M861.2,87 H867 L861.2,93.2 H867.2" stroke="#505050" stroke-width="1.5" fill="none"/>
<path d="M869,81.8 H877.6 L874.4,85.8 V89.8 L872.2,89.8 V85.8 Z" fill="#fff" stroke="#505050" stroke-width="1.3"/>
<path d="M883.2,84.6 L886.0,87.39999999999999 L888.8000000000001,84.6" stroke="#505050" stroke-width="1.2" fill="none"/>
<rect x="820.6" y="103" width="15.8" height="14.4" fill="#fff" stroke="#505050" stroke-width="1.2"/><path d="M820.6,104.6 H836.4" stroke="#505050" stroke-width="2.2"/>
<path d="M828.2,107.2 V114.6 M825.6,112 L828.2,114.8 L830.8,112" stroke="#1f8ad2" stroke-width="1.5" fill="none"/>
<path d="M842.4,109.4 L845.1,112.10000000000001 L847.8,109.4" stroke="#505050" stroke-width="1.2" fill="none"/>
<circle cx="871.8" cy="107.2" r="5.4" fill="#fff" stroke="#505050" stroke-width="1.3"/><path d="M868,111 L862.2,117.6" stroke="#505050" stroke-width="1.4"/>
<path d="M883.2,109.6 L886.0,112.39999999999999 L888.8000000000001,109.6" stroke="#505050" stroke-width="1.2" fill="none"/>
<path d="M830.4,127.6 L836.2,133.4 L825.6,142 L820.8,137.2 Z" fill="#fff" stroke="#b146c2" stroke-width="1.4" stroke-linejoin="round"/><path d="M824,134 L829,139 L825.6,142 L820.8,137.2 Z" fill="#c77cd4" stroke="#b146c2" stroke-width="1.4" stroke-linejoin="round"/>
<path d="M842.4,133.8 L845.1,136.5 L847.8,133.8" stroke="#505050" stroke-width="1.2" fill="none"/>
<rect x="921.6" y="77.6" width="32.4" height="32.4" fill="#fff" stroke="#3c3c3c" stroke-width="1.5"/>
<rect x="922.4" y="78.4" width="30.8" height="4" fill="#c8c8c8"/>
<path d="M921.6,82.6 H954 M921.6,91.7 H926 M947,91.7 H954 M921.6,100.4 H927 M946,100.4 H954 M932.1,101 V110 M943.4,102 V110" stroke="#555" stroke-width="1.2"/>
<circle cx="936.5" cy="91" r="10.2" fill="#fff" stroke="#3c3c3c" stroke-width="1.5"/>
<path d="M943.9,98.8 L954.4,110" stroke="#3c3c3c" stroke-width="1.6"/>
<rect x="930.8" y="89.8" width="3.6" height="5.4" fill="#c8c8c8" stroke="#777" stroke-width="0.8"/>
<rect x="934.4" y="85" width="4" height="10.2" fill="#fff" stroke="#555" stroke-width="1"/>
<rect x="938.6" y="86.6" width="3.8" height="8.6" fill="#7fbff0" stroke="#1f7ad2" stroke-width="1"/>
<path d="M1003.4,168.6 L1008.6,163.2 L1013.8,168.6" stroke="#444" stroke-width="1.3" fill="none"/></svg>
<svg class="a" style="left:0px;top:0px;" width="1024" height="80" viewBox="0 0 1024 80">
<path d="M782.6,48.4 H793.4 V55.2 H787.6 L784.6,58.2 V55.2 H782.6 Z" stroke="#217346" stroke-width="1.3" fill="none" stroke-linejoin="round"/>
<path d="M897.4,51.8 V59.2 H907.4 V56.2 M900.6,56 C900.8,52.4 903,50.6 907,50.6 M904.8,48 L907.6,50.6 L904.8,53.2" stroke="#217346" stroke-width="1.3" fill="none"/>
<path d="M962.6,52.8 L965.6,55.8 L968.6,52.8" stroke="#217346" stroke-width="1.4" fill="none"/>
<circle cx="995.8" cy="53.4" r="3.6" fill="#f3f2f1" stroke="#333" stroke-width="1.3"/>
<path d="M990.6,62 C990.8,58.8 993,57.4 995.8,57.4 C998.6,57.4 1000.6,58.8 1000.8,62" stroke="#333" stroke-width="1.3" fill="none"/>
<path d="M999.6,50.4 V45.6 H1006.6 V52.8 H1003.2 L1001,55" stroke="#333" stroke-width="1.3" fill="none"/>
</svg>
<svg class="a" style="left:0px;top:170px;" width="1024" height="60" viewBox="0 0 1024 60">
<path d="M100.8,24.2 H106.2 L103.5,27.4 Z" fill="#666"/>
<circle cx="130.2" cy="20.6" r="1" fill="#888"/><circle cx="130.2" cy="25.5" r="1" fill="#888"/><circle cx="130.2" cy="30.4" r="1" fill="#888"/>
<path d="M159.2,21.4 L171.6,32 M171.6,21.4 L159.2,32" stroke="#b4b4b4" stroke-width="1.3"/>
<path d="M197.6,26.8 L202.2,31.6 L211,21.6" stroke="#b4b4b4" stroke-width="1.8" fill="none"/>
<path d="M1005.8,23.4 L1009.4,27 L1013,23.4" stroke="#555" stroke-width="1.5" fill="none"/>
</svg>
<div class="t" style="left:234.6px;top:188.61px;font-size:16px;font-style:italic;font-weight:bold;color:#555;font-family:'Liberation Serif',serif;letter-spacing:-0.5px">fx</div>
<svg class="a" style="left:0px;top:210px;" width="1024" height="160" viewBox="0 0 1024 160">
<path d="M26.6,13.2 V26.4 H13.6 Z" fill="#bdbdbd"/>
<path d="M167,30.6 H172.2 L167,35.8 Z" fill="#1d8a3c"/>
<path d="M167,91.8 H172.2 L167,97 Z" fill="#1d8a3c"/>
</svg>
<div class="a" style="left:236px;top:343px;width:21px;height:21px;background:#fff;border:1px solid #c6c6c6;box-shadow:1px 1px 1px rgba(0,0,0,0.08);"></div>
<svg class="a" style="left:0px;top:0px;" width="1024" height="576" viewBox="0 0 1024 576">
<rect x="238.6" y="347.2" width="6.6" height="4" fill="#3d7ff0"/>
<rect x="245.2" y="347.6" width="7" height="3.4" fill="#fff" stroke="#8a8a8a" stroke-width="0.9" rx="0.8"/>
<rect x="238.6" y="351.2" width="6.6" height="4" fill="#fff" stroke="#8a8a8a" stroke-width="0.9"/>
<path d="M238.6,356.8 V358.4 H245.2 V356.8" stroke="#9a9a9a" stroke-width="0.9" stroke-dasharray="1.2 1" fill="none"/>
<path d="M247.6,357.4 H252.4 M250,355 V359.8" stroke="#8a8a8a" stroke-width="1.2"/>
</svg>
<svg class="a" style="left:0px;top:0px;" width="1024" height="576" viewBox="0 0 1024 576">
<path d="M29.8,535.8 V543.2 L25.6,539.5 Z" fill="#c6c6c6"/>
<path d="M49.4,535.8 V543.4 L54.2,539.6 Z" fill="#217346"/>
<rect x="640" y="540.6" width="1.8" height="1.8" fill="#217346"/><rect x="644.6" y="540.6" width="1.8" height="1.8" fill="#217346"/><rect x="649.2" y="540.6" width="1.8" height="1.8" fill="#217346"/>
<circle cx="670.6" cy="540.4" r="7.8" fill="none" stroke="#777" stroke-width="1.2"/>
<path d="M666.2,540.4 H675 M670.6,536 V544.8" stroke="#777" stroke-width="1.3"/>
<rect x="695" y="535" width="1.8" height="1.8" fill="#aaa"/><rect x="695" y="539.4" width="1.8" height="1.8" fill="#aaa"/><rect x="695" y="543.6" width="1.8" height="1.8" fill="#aaa"/>
<path d="M719,536.2 V543.4 L715.2,539.8 Z" fill="#222"/>
<path d="M992.4,536.2 V543.8 L997,540 Z" fill="#222"/>
<path d="M1007.4,231.6 H1017.4 L1012.4,226.6 Z" fill="#222"/>
<path d="M1007.4,516.4 H1017.4 L1012.4,521.4 Z" fill="#222"/>
</svg>
<svg class="a" style="left:0px;top:0px;" width="1024" height="576" viewBox="0 0 1024 576">
<g stroke="#555" stroke-width="1.1" fill="none">
<rect x="61.6" y="557.8" width="13.6" height="12.2"/>
<path d="M61.6,560.2 H75.2 M63,562.6 H65.4 M63,564.8 H65.4 M63,567 H65.4" stroke-width="1.2"/>
<circle cx="71" cy="566.4" r="4.2" fill="#f3f2f1" stroke-width="1.4"/>
</g>
<circle cx="71" cy="566.4" r="2" fill="#444"/>
<g stroke="#555" stroke-width="1.1" fill="none">
<path d="M587.2,566.2 H577.6 V557.6 H591.4 V561"/>
<circle cx="587.8" cy="565.8" r="2.6" stroke-width="1.8" stroke-dasharray="1.3 0.8"/>
</g>
<g stroke="#555" stroke-width="1.2" fill="none">
<rect x="708" y="557.8" width="13.4" height="12.4"/>
<path d="M712.5,557.8 V570.2 M717,557.8 V570.2 M708,562 H721.4 M708,566.2 H721.4"/>
<rect x="750.4" y="557.8" width="14.2" height="12.4"/>
<rect x="753.4" y="560.4" width="8.2" height="7.2"/>
<path d="M755,562.6 H760 M755,565 H760" stroke-width="1"/>
<rect x="793.4" y="557.8" width="14.2" height="12.4"/><path d="M799,557.8 V563.6 H803.4 V557.8"/>
</g>
<path d="M828.2,563.6 H836" stroke="#555" stroke-width="1.2"/>
<path d="M953,563.8 H961.4 M957.2,559.6 V568" stroke="#666" stroke-width="1.2"/>
</svg>
</body></html>
